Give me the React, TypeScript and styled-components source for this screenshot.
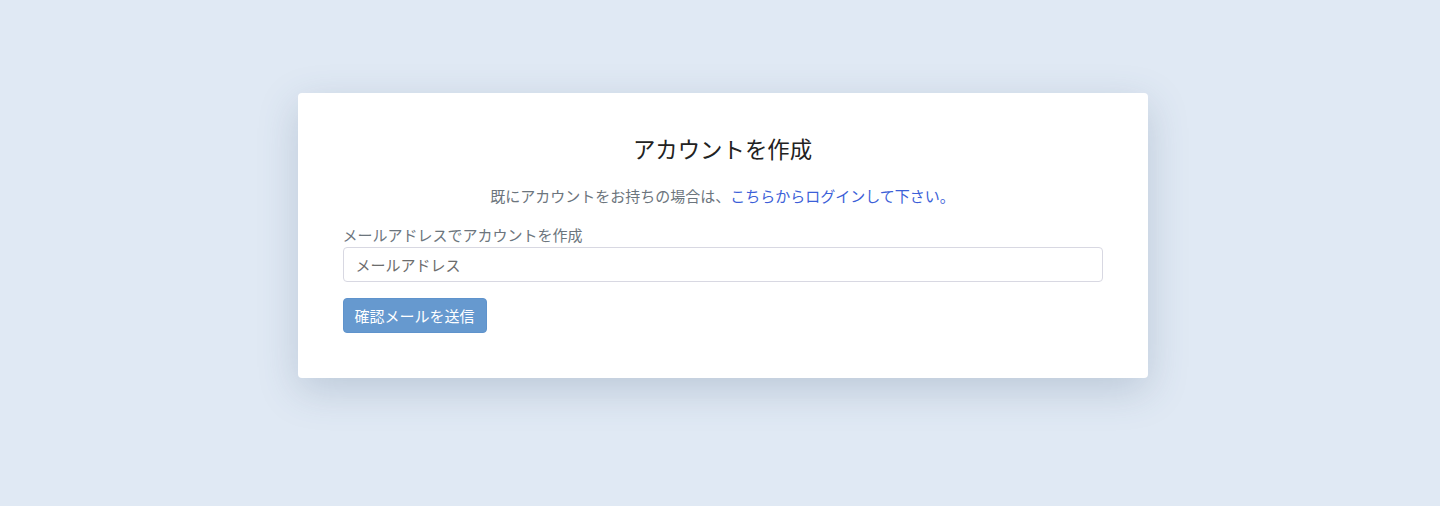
import styled, { createGlobalStyle } from "styled-components";

const GlobalStyle = createGlobalStyle`
  html, body {
    margin: 0;
    padding: 0;
    background: #e0e9f4;
  }
  body {
    font-family: "Noto Sans CJK JP", "Noto Sans", sans-serif;
  }
  * {
    box-sizing: border-box;
  }
`;

const Page = styled.div`
  min-height: 506px;
  display: flex;
  justify-content: center;
  align-items: flex-start;
  padding: 93px 0 0 5px;
`;

const Card = styled.div`
  width: 850px;
  background: #ffffff;
  border-radius: 4px;
  padding: 42px 45px 45px;
  box-shadow: 0 12px 40px rgba(60, 85, 120, 0.22);
  display: flex;
  flex-direction: column;
`;

const Title = styled.h1`
  margin: 0;
  font-size: 22.4px;
  line-height: 26px;
  font-weight: 400;
  color: #222;
  text-align: center;
`;

const Lead = styled.p`
  margin: 24px 0 0;
  font-size: 15px;
  line-height: 22px;
  color: #6c757d;
  text-align: center;
`;

const Link = styled.a`
  color: #3c5fd8;
  text-decoration: none;
  cursor: pointer;
`;

const Label = styled.label`
  margin-top: 17px;
  font-size: 15px;
  line-height: 22px;
  color: #6c757d;
`;

const Input = styled.input`
  margin-top: 1px;
  height: 35px;
  width: 100%;
  border: 1px solid #d8d8e2;
  border-radius: 4px;
  padding: 0 12px;
  font-family: inherit;
  font-size: 15px;
  color: #333;
  outline: none;

  &::placeholder {
    color: #6c6c6c;
  }
`;

const Button = styled.button`
  margin-top: 16px;
  align-self: flex-start;
  height: 35px;
  padding: 0 11px;
  border: 1px solid #5f93cc;
  border-radius: 4px;
  background: #6699cf;
  color: #ffffff;
  font-family: inherit;
  font-size: 15px;
  cursor: pointer;
`;

export default function App() {
  return (
    <>
      <GlobalStyle />
      <Page>
        <Card>
          <Title>アカウントを作成</Title>
          <Lead>
            既にアカウントをお持ちの場合は、
            <Link>こちらからログインして下さい。</Link>
          </Lead>
          <Label htmlFor="email">メールアドレスでアカウントを作成</Label>
          <Input id="email" type="email" placeholder="メールアドレス" />
          <Button type="button">確認メールを送信</Button>
        </Card>
      </Page>
    </>
  );
}
